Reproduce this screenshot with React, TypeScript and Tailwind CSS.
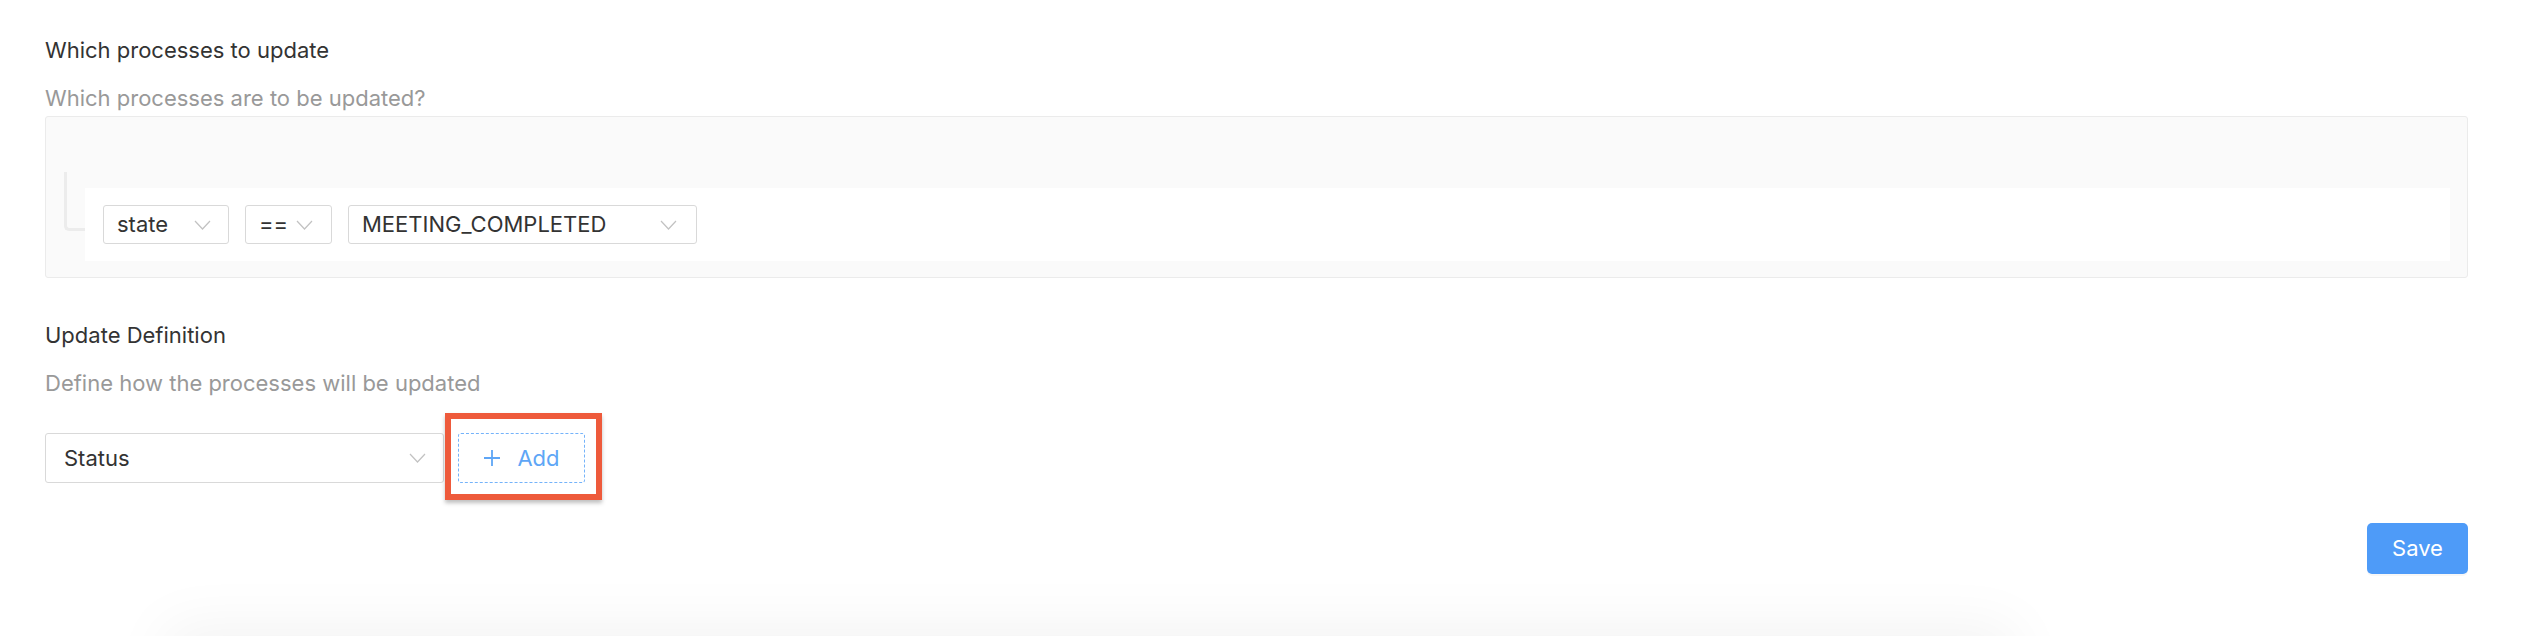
import React from 'react';

const Chevron = () => (
  <svg viewBox="0 0 17 10" className="h-[10px] w-[17px] shrink-0" fill="none">
    <polyline points="1,1 8.5,9 16,1" stroke="#c2c2c2" strokeWidth="1.2" />
  </svg>
);

const Select = ({ value, className }: { value: string; className: string }) => (
  <div
    className={`flex items-center justify-between rounded-[3px] border border-[#d9d9d9] bg-white text-[#333] ${className}`}
  >
    <span>{value}</span>
    <Chevron />
  </div>
);

export default function App() {
  return (
    <div className="h-[636px] overflow-hidden bg-white font-['Inter',sans-serif] text-[22px] leading-[33px]">
      <div className="pl-[45px] pr-[62px] pt-[34px]">
        {/* Filter section */}
        <div className="text-[#333]">Which processes to update</div>
        <div className="mt-[15px] text-[#999]">Which processes are to be updated?</div>

        <div className="mt-px flex items-start rounded-[3px] border border-[#ebebeb] bg-[#fafafa] pb-[16px] pl-[18px] pr-[17px]">
          <div className="mt-[55px] h-[59px] w-[21px] shrink-0 rounded-bl-[5px] border-b-[3px] border-l-[3px] border-[#ececec]" />
          <div className="mt-[71px] flex flex-1 items-center gap-[16px] bg-white px-[18px] py-[17px]">
            <Select value="state" className="h-[39px] w-[126px] pl-[13px] pr-[17px]" />
            <Select value="==" className="h-[39px] w-[87px] pl-[13px] pr-[18px]" />
            <Select value="MEETING_COMPLETED" className="h-[39px] w-[349px] pl-[13px] pr-[19px]" />
          </div>
        </div>

        {/* Update definition */}
        <div className="mt-[41px] text-[#333]">Update Definition</div>
        <div className="mt-[15px] text-[#999]">Define how the processes will be updated</div>

        <div className="mt-[33px] flex items-center gap-[14px]">
          <Select value="Status" className="h-[50px] w-[399px] pl-[18px] pr-[17px]" />
          <div className="relative">
            <button className="flex h-[50px] w-[127px] items-center justify-center gap-[16px] rounded-[3px] border border-dashed border-[#74b3fa] text-[#5ea6f6]">
              <svg viewBox="0 0 18 18" className="h-[18px] w-[18px]" fill="none">
                <path d="M9 1v16M1 9h16" stroke="#5ea6f6" strokeWidth="1.8" />
              </svg>
              <span>Add</span>
            </button>
            <div className="pointer-events-none absolute -bottom-[17px] -left-[13px] -right-[17px] -top-[20px] border-[6px] border-[#ee5a3b] shadow-[0_3px_4px_rgba(0,0,0,0.25)]" />
          </div>
        </div>

        <div className="mt-[40px] flex justify-end">
          <button className="h-[51px] w-[101px] rounded-[5px] bg-[#4e9bf8] text-white shadow-[0_2px_0_rgba(0,0,0,0.03)]">
            Save
          </button>
        </div>

        <div className="ml-[140px] mt-[72px] h-[100px] w-[1810px] bg-white shadow-[0_0_60px_20px_rgba(0,0,0,0.05)]" />
      </div>
    </div>
  );
}
